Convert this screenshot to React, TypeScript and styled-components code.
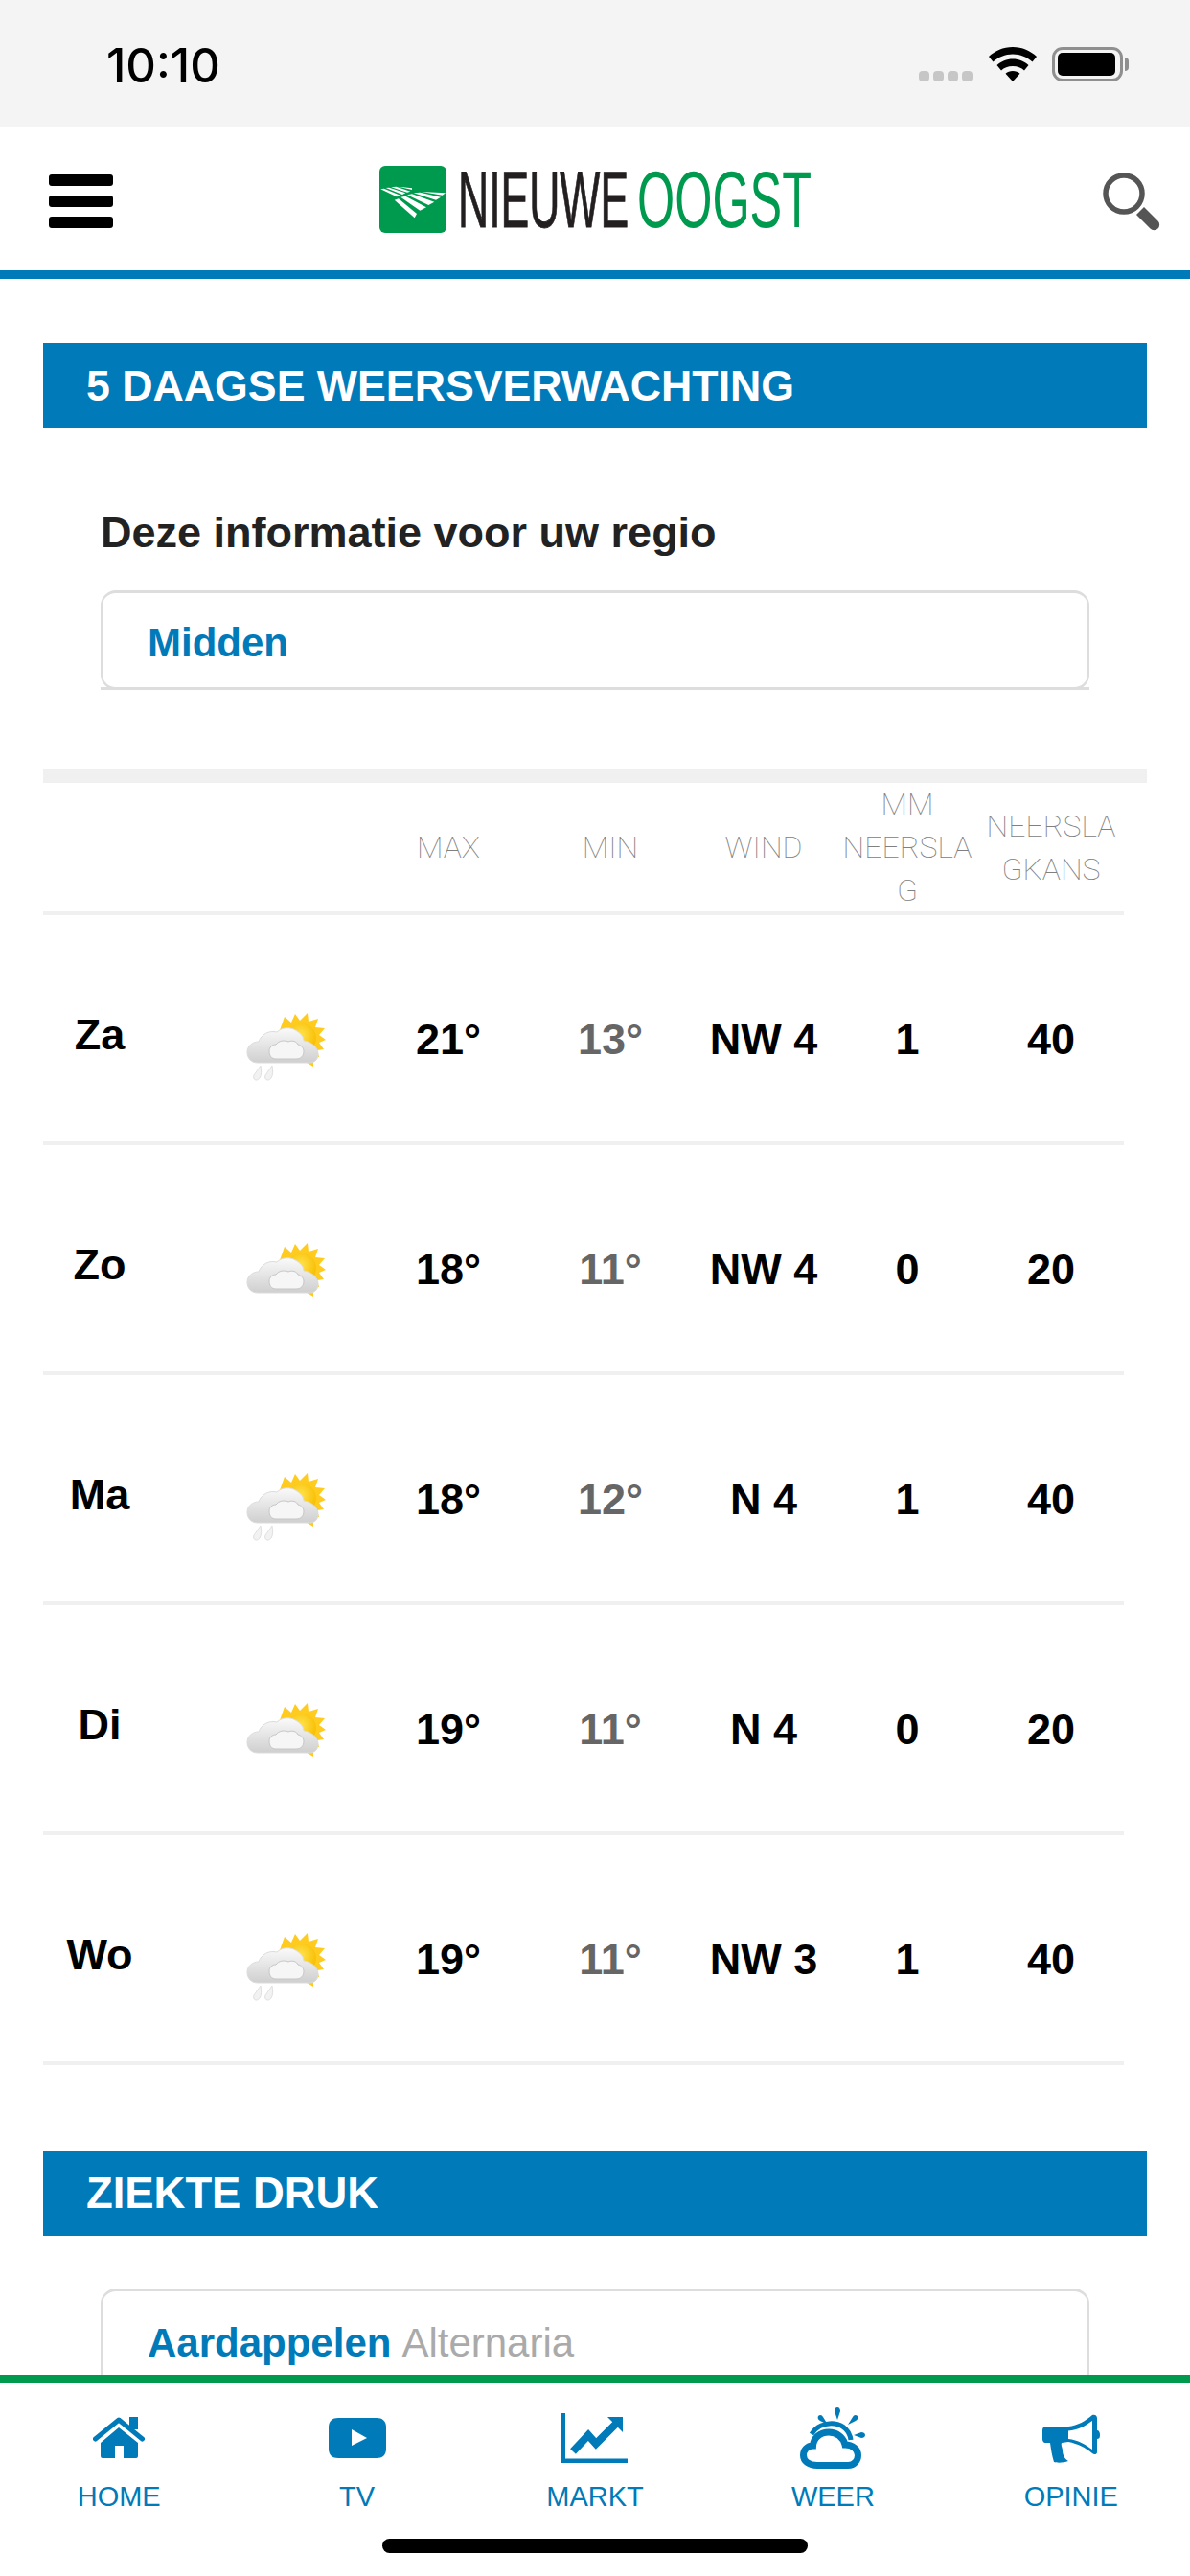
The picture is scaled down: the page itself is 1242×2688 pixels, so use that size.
import React from "react";
import styled, { createGlobalStyle } from "styled-components";

const BLUE = "#007ab8";
const GREEN = "#009a4e";

const days = [
  { day: "Za", rain: true, max: "21°", min: "13°", wind: "NW 4", mm: "1", kans: "40" },
  { day: "Zo", rain: false, max: "18°", min: "11°", wind: "NW 4", mm: "0", kans: "20" },
  { day: "Ma", rain: true, max: "18°", min: "12°", wind: "N 4", mm: "1", kans: "40" },
  { day: "Di", rain: false, max: "19°", min: "11°", wind: "N 4", mm: "0", kans: "20" },
  { day: "Wo", rain: true, max: "19°", min: "11°", wind: "NW 3", mm: "1", kans: "40" },
];

const GlobalStyle = createGlobalStyle`
  html, body {
    margin: 0;
    padding: 0;
    background: #fff;
    font-family: "Liberation Sans", Arial, sans-serif;
  }
`;

const WeatherIcon = ({ rain }: { rain: boolean }) => (
  <svg width="90" height="75" viewBox="0 0 90 75">
    <defs>
      <radialGradient id="sun" cx="45%" cy="40%" r="60%">
        <stop offset="0%" stopColor="#ffe34f" />
        <stop offset="100%" stopColor="#f8bd00" />
      </radialGradient>
      <linearGradient id="cloud" x1="0" y1="0" x2="0" y2="1">
        <stop offset="0%" stopColor="#fafafa" />
        <stop offset="100%" stopColor="#cfcfcf" />
      </linearGradient>
    </defs>
    <polygon
      points="37,20 42,6 49,12 53,3 58,10 66,2 67,11 77,8 74,17 84,18 78,25 85,30 78,33 83,40 76,41 78,48 72,48 72,58 45,42"
      fill="#ffcb1f"
    />
    <circle cx="60" cy="28" r="15" fill="url(#sun)" />
    <path
      d="M14 54C7 54 3 49 3 43 3 36 9 32 15 32 18 24 26 20 34 22 39 17 48 16 55 21 60 24 62 28 62 31 70 32 77 38 77 45 77 50 74 54 68 54Z"
      fill="url(#cloud)"
      stroke="#dcdcdc"
      strokeWidth="1"
    />
    <path
      d="M33 50C28 50 26 46 26 42 26 38 29 35 33 35 36 31 41 30 46 32 50 30 55 32 56 35 60 36 62 39 62 42 62 47 59 50 54 50Z"
      fill="#f6f6f6"
      stroke="#c6c6c6"
      strokeWidth="1"
    />
    {rain && (
      <g fill="#f2f2f2" stroke="#e0e0e0" strokeWidth="1">
        <path d="M13 72c-3 0-4-2-3-5l7-10c1 5 1 10-1 13-1 1-2 2-3 2z" />
        <path d="M25 72c-3 0-4-2-3-5l7-10c1 5 1 10-1 13-1 1-2 2-3 2z" />
      </g>
    )}
  </svg>
);

const App = () => {
  return (
    <Page>
      <GlobalStyle />
      <StatusBar>
        <Clock>10:10</Clock>
        <StatusIcons>
          <Dots>
            <i />
            <i />
            <i />
            <i />
          </Dots>
          <svg width="50" height="36" viewBox="0 0 50 36">
            <path d="M25 0C15 0 6.500 4 0 10l4.500 5.500C10 10.500 17 7.500 25 7.500s15 3 20.500 8L50 10C43.500 4 35 0 25 0z" />
            <path d="M25 12.500c-6.500 0-12 2.500-16.500 6.500l4.500 5.500c3-2.800 7-4.500 12-4.500s9 1.700 12 4.500l4.500-5.500C37 15 31.500 12.500 25 12.500z" />
            <path d="M25 25c-3 0-5.500 1-7.500 2.800L25 36l7.500-8.200C30.500 26 28 25 25 25z" />
          </svg>
          <Battery>
            <BatteryFill />
          </Battery>
        </StatusIcons>
      </StatusBar>

      <TopBar>
        <Burger>
          <i />
          <i />
          <i />
        </Burger>
        <Logo>
          <svg width="70" height="70" viewBox="0 0 70 70">
            <rect width="70" height="70" rx="6" fill={GREEN} />
            <g fill="#fff">
              <polygon points="15.700,35.700 20,34.300 39,50 36.700,54.300" />
              <polygon points="22.300,32.700 27.300,31.700 49,43.300 42.300,46.700" />
              <polygon points="29,30.300 34,29.300 57.300,37.700 51.300,41" />
              <polygon points="35.700,28.300 42.300,27.700 64,32.700 59,35.700" />
              <polygon points="44,27 69,28.300 65.700,30.700" />
              <polygon points="1.300,24.300 4.700,23.700 22.300,31 18,32.300" />
              <polygon points="6.700,23 10,22.700 27.300,28.300 24,30" />
              <polygon points="12.300,22.300 17.300,21.700 32.300,26.700 29,27.700" />
              <polygon points="20,21.700 34,23.300 34,25" />
            </g>
          </svg>
          <Wordmark>
            <Word $green={false} $scale={0.53}>
              NIEUWE
            </Word>
            <Word $green $scale={0.6}>
              OOGST
            </Word>
          </Wordmark>
        </Logo>
        <svg width="62" height="62" viewBox="0 0 62 62">
          <circle cx="23" cy="23" r="19" fill="none" stroke="#555" strokeWidth="5.500" />
          <path d="M36 45L44 37L58.500 51.500a5.600 5.600 0 0 1-8 8Z" fill="#555" />
        </svg>
      </TopBar>

      <Main>
        <SectionBar>5 DAAGSE WEERSVERWACHTING</SectionBar>
        <RegionBlock>
          <RegionLabel>Deze informatie voor uw regio</RegionLabel>
          <SelectBox>
            <SelectValue>Midden</SelectValue>
          </SelectBox>
        </RegionBlock>

        <TableTop />
        <Table>
          <HeadRow>
            <span />
            <span />
            <HeadCell>MAX</HeadCell>
            <HeadCell>MIN</HeadCell>
            <HeadCell>WIND</HeadCell>
            <HeadCell>
              MM NEERSLA
              <br />G
            </HeadCell>
            <HeadCell>
              NEERSLA
              <br />
              GKANS
            </HeadCell>
          </HeadRow>
          {days.map((d) => (
            <DayRow key={d.day}>
              <DayName>{d.day}</DayName>
              <IconCell>
                <WeatherIcon rain={d.rain} />
              </IconCell>
              <Value>{d.max}</Value>
              <Value $muted>{d.min}</Value>
              <Value>{d.wind}</Value>
              <Value>{d.mm}</Value>
              <Value>{d.kans}</Value>
            </DayRow>
          ))}
        </Table>

        <SecondBar>ZIEKTE DRUK</SecondBar>
        <SecondBox>
          <SelectValue>Aardappelen</SelectValue> <Sub>Alternaria</Sub>
        </SecondBox>
      </Main>

      <TabBar>
        <Tabs>
          <Tab>
            <TabIcon>
              <svg width="54" height="44" viewBox="0 0 54 44" fill={BLUE}>
                <rect x="38" y="0" width="9" height="13" />
                <path
                  d="M2.500 23L27 3L51.500 23"
                  fill="none"
                  stroke={BLUE}
                  strokeWidth="5"
                  strokeLinecap="round"
                  strokeLinejoin="round"
                />
                <path d="M27 11L47 27V41a2 2 0 0 1-2 2H32V30H23V43H10a2 2 0 0 1-2-2V27Z" />
              </svg>
            </TabIcon>
            <TabLabel>HOME</TabLabel>
          </Tab>
          <Tab>
            <TabIcon>
              <svg width="60" height="42" viewBox="0 0 60 42">
                <path
                  d="M10 0h40c6 0 10 3 10 10v22c0 7-4 10-10 10H10C4 42 0 39 0 32V10C0 3 4 0 10 0z"
                  fill={BLUE}
                />
                <polygon points="24,12 40,21 24,29" fill="#fff" />
              </svg>
            </TabIcon>
            <TabLabel>TV</TabLabel>
          </Tab>
          <Tab>
            <TabIcon>
              <svg width="69" height="52" viewBox="0 0 69 52" fill={BLUE}>
                <polygon points="0,0 4,0 4,47.500 69,47.500 69,52 0,52" />
                <polyline
                  points="12,40 28,23 36,32 57,11"
                  fill="none"
                  stroke={BLUE}
                  strokeWidth="8"
                />
                <polygon points="48,4 64,4 64,20" />
              </svg>
            </TabIcon>
            <TabLabel>MARKT</TabLabel>
          </Tab>
          <Tab>
            <TabIcon>
              <svg width="68" height="64" viewBox="0 0 68 64" fill={BLUE}>
                <path d="M39 0c2 0 3 2 3 4l-3 9-3-9c0-2 1-4 3-4z" />
                <path d="M19 9c2-2 4-1 5 1l5 8-8-4c-2-1-3-3-2-5z" />
                <path d="M60 9c1 2 0 4-2 5l-8 4 5-8c1-2 3-3 5-1z" />
                <path d="M56 29l8-3c2 0 4 1 4 3s-2 3-4 3z" />
                <path
                  d="M12 28C17 20 26 16 36 17C45 18 52 25 53 34"
                  fill="none"
                  stroke={BLUE}
                  strokeWidth="5"
                />
                <path
                  d="M18 60.500H50C57 60.500 60.500 55 60.500 50C60.500 44 55 39 47 39C45 31 38 26 30 26C21 26 14 32 13.500 40C7 40 3.500 45 3.500 50C3.500 56 9 60.500 18 60.500Z"
                  fill="#fff"
                  stroke={BLUE}
                  strokeWidth="7"
                />
              </svg>
            </TabIcon>
            <TabLabel>WEER</TabLabel>
          </Tab>
          <Tab>
            <TabIcon>
              <svg width="60" height="51" viewBox="0 0 60 51" fill={BLUE} fillRule="evenodd">
                <path d="M3 13H27C37 12 45 7 52 1C54 0 57 1 57 4V17C59 17 60 19 60 22C60 25 59 26 57 26V40C57 42 54 43 52 41C45 35 37 31 27 29L20 30C19 33 21 35 21 38C21 42 23 47 27 49C22 51 15 51 12 50C10 44 9 37 8 30H3C1 30 0 28 0 26V17C0 15 1 13 3 13ZM27 17.500V26C37 27 45 32 52 37V7C45 12 37 17 27 17.500Z" />
              </svg>
            </TabIcon>
            <TabLabel>OPINIE</TabLabel>
          </Tab>
        </Tabs>
        <HomeIndicator />
      </TabBar>
    </Page>
  );
};

export default App;

const Page = styled.div`
  width: 1242px;
  height: 2688px;
  display: flex;
  flex-direction: column;
  overflow: hidden;
  background: #fff;
`;

const StatusBar = styled.div`
  height: 132px;
  flex: none;
  background: #f4f4f4;
  display: flex;
  justify-content: space-between;
  align-items: flex-start;
  padding: 0 70px 0 111px;
`;

const Clock = styled.div`
  margin-top: 41px;
  font-family: Inter, sans-serif;
  font-size: 49px;
  font-weight: 500;
  line-height: 56px;
  color: #000;
`;

const StatusIcons = styled.div`
  margin-top: 49px;
  display: flex;
  align-items: flex-start;
  svg {
    margin: 0 16px 0 17px;
  }
`;

const Dots = styled.div`
  margin-top: 25px;
  display: flex;
  gap: 4px;
  i {
    display: block;
    width: 11px;
    height: 11px;
    border-radius: 4px;
    background: #c6c6c6;
  }
`;

const Battery = styled.div`
  position: relative;
  width: 74px;
  height: 36px;
  box-sizing: border-box;
  border: 3px solid #8f8f8f;
  border-radius: 11px;
  padding: 3px 5px 3px 3px;
  &::after {
    content: "";
    position: absolute;
    right: -9px;
    top: 8px;
    width: 4px;
    height: 14px;
    border-radius: 0 5px 5px 0;
    background: #8f8f8f;
  }
`;

const BatteryFill = styled.div`
  height: 100%;
  border-radius: 5px;
  background: #000;
`;

const TopBar = styled.div`
  height: 144px;
  flex: none;
  padding: 6px 30px 0 51px;
  border-bottom: 9px solid ${BLUE};
  display: flex;
  justify-content: space-between;
  align-items: center;
`;

const Burger = styled.div`
  width: 67px;
  display: flex;
  flex-direction: column;
  gap: 10px;
  i {
    display: block;
    height: 12px;
    border-radius: 3px;
    background: #000;
  }
`;

const Logo = styled.div`
  display: flex;
  align-items: center;
  gap: 12px;
  margin: 0 26px 4px 0;
`;

const Wordmark = styled.div`
  display: flex;
  gap: 12px;
  height: 70px;
`;

const Word = styled.span<{ $green: boolean; $scale: number }>`
  display: block;
  font-size: 84px;
  line-height: 70px;
  color: ${({ $green }) => ($green ? GREEN : "#231f20")};
  -webkit-text-stroke: ${({ $green }) => ($green ? "0" : "1px")} currentColor;
  width: ${({ $green }) => ($green ? "181px" : "175px")};
  white-space: nowrap;
  transform-origin: left center;
  transform: scaleX(${({ $scale }) => $scale});
`;

const Main = styled.div`
  flex: 1;
  min-height: 0;
  overflow: hidden;
  padding: 67px 45px 0;
`;

const SectionBar = styled.div`
  height: 89px;
  background: ${BLUE};
  color: #fff;
  font-size: 44.7px;
  font-weight: 700;
  line-height: 89px;
  padding-left: 45px;
`;

const SecondBar = styled(SectionBar)`
  margin-top: 89px;
  font-size: 45.4px;
`;

const RegionBlock = styled.div`
  padding: 0 60px;
  margin-top: 84px;
`;

const RegionLabel = styled.div`
  font-size: 45px;
  font-weight: 700;
  line-height: 50px;
  color: #222;
`;

const SelectBox = styled.div<{ $inset?: number }>`
  position: relative;
  margin-top: 35px;
  height: 104px;
  box-sizing: border-box;
  border: 2px solid #ddd;
  border-top-width: 3px;
  border-bottom-width: 3px;
  border-radius: 16px;
  padding: 6px 0 0 47px;
  display: flex;
  align-items: center;
  font-size: 42px;
  &::after {
    content: "";
    position: absolute;
    left: -2px;
    right: -2px;
    bottom: -3px;
    height: 3px;
    background: #ddd;
  }
`;

const SelectValue = styled.span`
  font-size: 42px;
  font-weight: 700;
  color: ${BLUE};
`;

const SecondBox = styled(SelectBox)`
  margin: 55px 60px 0;
  padding-top: 10px;
  gap: 11px;
`;

const Sub = styled.span`
  color: #aaa;
`;

const TableTop = styled.div`
  height: 15px;
  margin-top: 82px;
  background: #f0f0f0;
`;

const Table = styled.div`
  width: 1128px;
`;

const columns = "118px 220px 170px 168px 152px 148px 152px";

const HeadRow = styled.div`
  display: grid;
  grid-template-columns: ${columns};
  align-items: center;
  height: 134px;
  border-bottom: 4px solid #f0f0f0;
`;

const HeadCell = styled.div`
  font-family: Roboto, sans-serif;
  font-weight: 100;
  font-size: 32px;
  line-height: 45px;
  color: #808080;
  text-align: center;
`;

const DayRow = styled.div`
  display: grid;
  grid-template-columns: ${columns};
  align-items: start;
  height: 236px;
  border-bottom: 4px solid #f0f0f0;
`;

const DayName = styled.div`
  padding-top: 99px;
  font-size: 45px;
  font-weight: 700;
  line-height: 52px;
  color: #000;
  text-align: center;
`;

const IconCell = styled.div`
  padding: 100px 0 0 54px;
  display: flex;
  justify-content: center;
`;

const Value = styled.div<{ $muted?: boolean }>`
  padding-top: 104px;
  font-size: 45px;
  font-weight: 700;
  line-height: 52px;
  text-align: center;
  color: ${({ $muted }) => ($muted ? "#666" : "#000")};
`;

const TabBar = styled.div`
  flex: none;
  height: 201px;
  border-top: 9px solid ${GREEN};
  background: #fff;
  display: flex;
  flex-direction: column;
  align-items: center;
`;

const Tabs = styled.div`
  width: 100%;
  display: grid;
  grid-template-columns: repeat(5, 1fr);
  padding-top: 22px;
`;

const Tab = styled.div`
  display: flex;
  flex-direction: column;
  align-items: center;
`;

const TabIcon = styled.div`
  height: 70px;
  display: flex;
  align-items: center;
  justify-content: center;
`;

const TabLabel = styled.div`
  margin-top: 9px;
  font-size: 29px;
  line-height: 34px;
  color: ${BLUE};
`;

const HomeIndicator = styled.div`
  margin-top: 27px;
  width: 444px;
  height: 15px;
  border-radius: 8px;
  background: #000;
`;
